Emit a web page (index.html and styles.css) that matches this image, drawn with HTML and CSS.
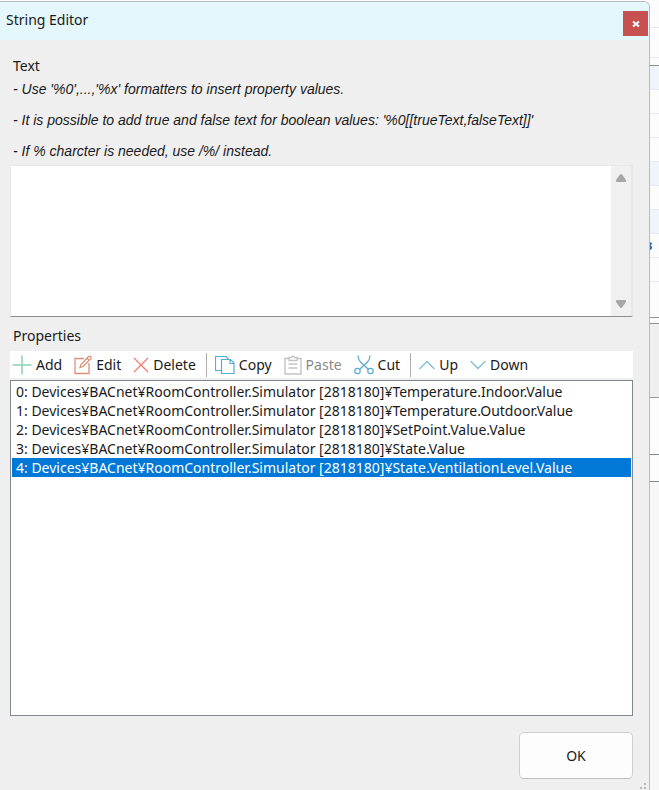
FILE: index.html
```html
<!DOCTYPE html>
<html lang="en">
    <head>
        <meta charset="utf-8">
        <title>String Editor</title>
        <link rel="stylesheet" href="styles.css">
    </head>
    <body>
        <main class="dialog">
            <header class="titlebar">
                <h1>String Editor</h1>
                <button class="close" type="button" aria-label="Close">
                    <svg width="8" height="8" viewBox="0 0 8 8"><path d="M1 1.500L7 6.500M7 1.500L1 6.500" /></svg>
                </button>
            </header>
            <div class="content">
                <label class="caption" for="text">Text</label>
                <div class="hints">
                    <p>- Use '%0',...,'%x' formatters to insert property values.</p>
                    <p>- It is possible to add true and false text for boolean values: '%0[[trueText,falseText]]'</p>
                    <p>- If % charcter is needed, use /%/ instead.</p>
                </div>
                <div class="editor">
                    <textarea id="text"></textarea>
                    <div class="scrollbar">
                        <svg width="12" height="10" viewBox="0 0 12 10"><path d="M5 1.500Q6 0.500 7 1.500L11 7Q11.500 9 10 9H2Q0.500 9 1 7Z" /></svg>
                        <svg width="12" height="10" viewBox="0 0 12 10"><path d="M5 8.500Q6 9.500 7 8.500L11 3Q11.500 1 10 1H2Q0.500 1 1 3Z" /></svg>
                    </div>
                </div>
                <h2 class="caption">Properties</h2>
                <div class="toolbar">
                    <button type="button">
                        <svg width="20" height="20" viewBox="0 0 20 20" stroke="#8fd0b4" stroke-width="1.500"><path d="M10 0.500V19.500M0.500 10H19.500" /></svg>
                        Add
                    </button>
                    <button type="button">
                        <svg width="18" height="20" viewBox="0 0 18 20" stroke="#dc9278" stroke-width="1.300"><path d="M10 3.500H1V18.500H15V8M6 12.500L7 9.500L14.500 1.500Q16 0.500 17 2Q17.500 3 16.500 4L9 11.500ZM13 3L15 5.500" /></svg>
                        Edit
                    </button>
                    <button type="button">
                        <svg width="16" height="16" viewBox="0 0 16 16" stroke="#f07c74" stroke-width="1.300"><path d="M1 1L15 15M15 1L1 15" /></svg>
                        Delete
                    </button>
                    <span class="separator"></span>
                    <button type="button">
                        <svg width="20" height="20" viewBox="0 0 20 20" stroke="#58acd0" stroke-width="1.200"><path d="M6 15.500H0.500V1.500H11L13.500 4M6.500 4.500H15.500L19 8V18.500H6.500ZM15 5V8.500H19" /></svg>
                        Copy
                    </button>
                    <button type="button" disabled>
                        <svg width="18" height="20" viewBox="0 0 18 20" stroke="#c4c4c4" stroke-width="1.400"><path d="M5 3.500H1V19H17V3.500H13M5 5.500V2.500H7.500Q9 -0.500 10.500 2.500H13V5.500ZM4.500 9H13.500M4.500 13H13.500" /></svg>
                        Paste
                    </button>
                    <button type="button">
                        <svg width="20" height="20" viewBox="0 0 20 20" stroke="#58acd0" stroke-width="1.200"><path d="M4 0.500Q4 4 6.500 7L14.500 14.500M16 0.500Q16 4 13.500 7L5.500 14.500" /><circle cx="3.500" cy="16" r="2.700" /><circle cx="16.500" cy="16" r="2.700" /></svg>
                        Cut
                    </button>
                    <span class="separator"></span>
                    <button type="button">
                        <svg width="16" height="10" viewBox="0 0 16 10" stroke="#82bfd5" stroke-width="1.300"><path d="M0.500 9L8 1.500L15.500 9" /></svg>
                        Up
                    </button>
                    <button type="button">
                        <svg width="16" height="10" viewBox="0 0 16 10" stroke="#82bfd5" stroke-width="1.300"><path d="M0.500 1L8 8.500L15.500 1" /></svg>
                        Down
                    </button>
                </div>
                <ul class="properties">
                    <li>0: Devices¥BACnet¥RoomController.Simulator [2818180]¥Temperature.Indoor.Value</li>
                    <li>1: Devices¥BACnet¥RoomController.Simulator [2818180]¥Temperature.Outdoor.Value</li>
                    <li>2: Devices¥BACnet¥RoomController.Simulator [2818180]¥SetPoint.Value.Value</li>
                    <li>3: Devices¥BACnet¥RoomController.Simulator [2818180]¥State.Value</li>
                    <li class="selected">4: Devices¥BACnet¥RoomController.Simulator [2818180]¥State.VentilationLevel.Value</li>
                </ul>
                <footer>
                    <button class="ok" type="button">OK</button>
                </footer>
            </div>
            <svg class="grip" width="7" height="7" viewBox="0 0 7 7"><path d="M4 0h2v2h-2zM0 4h2v2h-2zM4 4h2v2h-2z" /></svg>
        </main>
        <!-- edge of the window behind the dialog -->
        <aside class="behind">
            <div class="head"></div>
            <div class="subhead"></div>
            <div class="gap"></div>
            <div class="row tinted"></div>
            <div class="row"></div>
            <div class="row"></div>
            <div class="row"></div>
            <div class="row tinted"></div>
            <div class="row"></div>
            <div class="row tinted"></div>
            <div class="row">3</div>
            <div class="row"></div>
            <div class="space"></div>
            <div class="bar"></div>
            <div class="panel"></div>
            <div class="box"></div>
            <div class="status"></div>
            <div class="rest"></div>
        </aside>
    </body>
</html>
```
FILE: styles.css
```css
*{
    box-sizing: border-box;
}
body{
    margin: 0;
    min-height: 100vh;
    display: grid;
    grid-template-columns: 1fr 9px;
    background: #FCFCFC;
    font-family: "Noto Sans", sans-serif;
    font-size: 14px;
    color: #1A1A1A;
}
h1, h2, p, ul{
    margin: 0;
    padding: 0;
    font-weight: normal;
}
button{
    font: inherit;
    color: inherit;
}
svg{
    fill: none;
}
.dialog{
    position: relative;
    display: flex;
    flex-direction: column;
    margin-top: 1px;
    background: #EFEFEF;
    border: 1px solid #B9BCBC;
    border-width: 1px 1px 0 0;
    border-top-right-radius: 6px;
}
.titlebar{
    display: flex;
    justify-content: space-between;
    height: 38px;
    padding: 0 1px 0 6px;
    background: #E4F7FA;
    border-top-right-radius: 5px;
}
h1{
    font-size: 14px;
    line-height: 36px;
}
.close{
    display: flex;
    align-items: center;
    justify-content: center;
    width: 25px;
    height: 25px;
    margin-top: 9px;
    padding: 0;
    border: 0;
    background: #C75050;
}
.close svg{
    stroke: #FFF;
    stroke-width: 2;
}
.content{
    flex: 1;
    display: flex;
    flex-direction: column;
    padding: 16px 16px 11px 10px;
}
.caption{
    padding-left: 3px;
    font-size: 14px;
    line-height: 20px;
}
.hints{
    padding: 2px 3px 3px;
    font-family: "Liberation Sans", Arial, sans-serif;
    font-style: italic;
    font-size: 14px;
    line-height: 22px;
}
.hints p + p{
    margin-top: 9px;
}
.editor{
    display: flex;
    height: 152px;
    border: 1px solid #E8E8E8;
    border-right-width: 2px;
    border-bottom: 1px solid #8C8C8C;
    background: #FFF;
}
textarea{
    flex: 1;
    border: 0;
    padding: 4px;
    resize: none;
    outline: 0;
    font: inherit;
}
.scrollbar{
    display: flex;
    flex-direction: column;
    justify-content: space-between;
    align-items: center;
    width: 20px;
    padding: 7px 0;
    background: #F0F0F0;
}
.scrollbar svg{
    fill: #A6A6A6;
}
h2.caption{
    margin: 9px 0 5px;
}
.toolbar{
    display: flex;
    align-items: center;
    height: 27px;
    margin-bottom: 2px;
    padding-left: 2px;
    background: #FFF;
}
.toolbar button{
    display: flex;
    align-items: center;
    gap: 4px;
    margin-right: 12px;
    padding: 0;
    border: 0;
    background: none;
}
.toolbar button:disabled{
    color: #8A8A8A;
}
.separator{
    width: 1px;
    height: 24px;
    margin: 0 8px 0 -2px;
    background: #AEAEAE;
}
.properties{
    flex: 1;
    padding: 1px;
    list-style: none;
    border: 1px solid #828790;
    background: #FFF;
}
.properties li{
    padding: 0 4px;
    line-height: 19px;
    white-space: nowrap;
    overflow: hidden;
}
.properties .selected{
    background: #0078D7;
    color: #FFF;
}
footer{
    display: flex;
    justify-content: flex-end;
    margin-top: 16px;
}
.ok{
    width: 114px;
    height: 47px;
    border: 1px solid #D0D0D0;
    border-bottom-color: #BEBEBE;
    border-radius: 5px;
    background: #FDFDFD;
}
.grip{
    position: absolute;
    right: 2px;
    bottom: 0;
    fill: #B8B8B8;
}
.behind{
    display: flex;
    flex-direction: column;
    overflow: hidden;
}
.behind div{
    border-bottom: 1px solid #E6E9F0;
}
.behind .head{
    height: 28px;
}
.behind .subhead{
    height: 30px;
}
.behind .gap{
    height: 8px;
    border-bottom-color: #8F8F8F;
}
.behind .row{
    height: 24px;
    font-size: 11px;
    font-weight: bold;
    line-height: 24px;
    color: #2A5FA8;
    text-indent: -4px;
}
.behind .tinted{
    background: #F0F4FB;
}
.behind .space{
    height: 36px;
    border-bottom-color: #8F8F8F;
}
.behind .bar{
    height: 6px;
    border-bottom-color: #8F8F8F;
}
.behind .panel{
    height: 74px;
    background: #EFEFEF;
    border-bottom-color: #9A9A9A;
}
.behind .box{
    height: 57px;
    border-bottom-color: #828790;
}
.behind .status{
    height: 27px;
    border-bottom-color: #828790;
}
.behind .rest{
    flex: 1;
    border: 0;
    background: #F7F7F7;
}
```
